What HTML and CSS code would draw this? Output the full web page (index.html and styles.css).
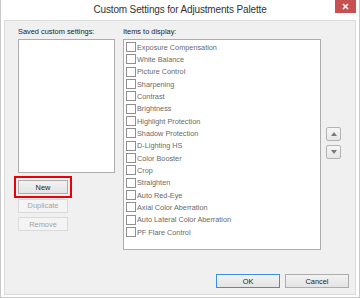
FILE: index.html
```html
<!DOCTYPE html>
<html lang="en">
<head>
    <meta charset="UTF-8">
    <title>Custom Settings for Adjustments Palette</title>
    <link rel="stylesheet" href="styles.css">
</head>
<body>
    <div class="window">
        <div class="titlebar">
            <span class="title">Custom Settings for Adjustments Palette</span>
            <svg class="win-close" width="21" height="13" viewBox="0 0 21 13">
                <rect width="21" height="13" fill="#c75050"/>
                <path d="M8 4 L13 9 M13 4 L8 9" stroke="#ffffff" stroke-width="1.6"/>
            </svg>
        </div>

        <div class="client">
            <div class="panes">
                <div class="saved-pane">
                    <div class="label">Saved custom settings:</div>
                    <div class="saved-list"></div>
                    <div class="side-buttons">
                        <button class="btn new-btn">New<span class="highlight"></span></button>
                        <button class="btn disabled">Duplicate</button>
                        <button class="btn disabled">Remove</button>
                    </div>
                </div>

                <div class="items-pane">
                    <div class="label">Items to display:</div>
                    <div class="items-list">
                        <label class="item"><span class="check"></span>Exposure Compensation</label>
                        <label class="item"><span class="check"></span>White Balance</label>
                        <label class="item"><span class="check"></span>Picture Control</label>
                        <label class="item"><span class="check"></span>Sharpening</label>
                        <label class="item"><span class="check"></span>Contrast</label>
                        <label class="item"><span class="check"></span>Brightness</label>
                        <label class="item"><span class="check"></span>Highlight Protection</label>
                        <label class="item"><span class="check"></span>Shadow Protection</label>
                        <label class="item"><span class="check"></span>D-Lighting HS</label>
                        <label class="item"><span class="check"></span>Color Booster</label>
                        <label class="item"><span class="check"></span>Crop</label>
                        <label class="item"><span class="check"></span>Straighten</label>
                        <label class="item"><span class="check"></span>Auto Red-Eye</label>
                        <label class="item"><span class="check"></span>Axial Color Aberration</label>
                        <label class="item"><span class="check"></span>Auto Lateral Color Aberration</label>
                        <label class="item"><span class="check"></span>PF Flare Control</label>
                    </div>
                </div>

                <div class="order-buttons">
                    <button class="arrow-btn"><span class="tri up"></span></button>
                    <button class="arrow-btn"><span class="tri down"></span></button>
                </div>
            </div>

            <div class="footer">
                <button class="btn wide default">OK</button>
                <button class="btn wide">Cancel</button>
            </div>
        </div>
    </div>
</body>
</html>
```

FILE: styles.css
```css
* {
    margin: 0;
    padding: 0;
    box-sizing: border-box;
}

body {
    font-family: 'Liberation Sans', Arial, sans-serif;
    background: #ffffff;
}

.window {
    width: 360px;
    height: 298px;
    display: flex;
    flex-direction: column;
    background: #ffffff;
    border: 1px solid #c9c9c9;
    border-top: none;
}

/* Title bar */
.titlebar {
    height: 20px;
    flex-shrink: 0;
    display: grid;
    grid-template-columns: 24px 1fr 24px;
    align-items: start;
}

.title {
    grid-column: 2;
    height: 20px;
    line-height: 20px;
    text-align: center;
    font-size: 10px;
    color: #333333;
    letter-spacing: -0.15px;
}

.win-close {
    grid-column: 3;
    display: block;
}

/* Client area */
.client {
    flex: 1;
    margin: 0 3px 2px 3px;
    background: #f0f0f0;
    border: 1px solid #dcdcdc;
    display: flex;
    flex-direction: column;
}

.panes {
    display: flex;
    padding: 6px 0 0 13px;
}

.label {
    height: 10px;
    line-height: 10px;
    font-size: 7.4px;
    color: #222222;
    margin-bottom: 2px;
}

.saved-pane {
    width: 97px;
    display: flex;
    flex-direction: column;
}

.saved-list {
    height: 134px;
    background: #ffffff;
    border: 1px solid #adadad;
}

.side-buttons {
    display: flex;
    flex-direction: column;
    gap: 4.5px;
    margin-top: 7px;
}

.btn {
    position: relative;
    width: 50px;
    height: 14px;
    font-family: inherit;
    font-size: 7.4px;
    color: #1e1e1e;
    background: linear-gradient(#f2f2f2, #e4e4e4);
    border: 1px solid #acacac;
}

.btn.disabled {
    color: #a3a3a3;
    background: #f4f4f4;
    border-color: #dadada;
}

.highlight {
    position: absolute;
    top: -5px;
    left: -5px;
    right: -5px;
    bottom: -5px;
    border: 2px solid #e8000b;
}

.items-pane {
    margin-left: 8px;
    display: flex;
    flex-direction: column;
}

.items-list {
    width: 198px;
    height: 211px;
    background: #ffffff;
    border: 1px solid #adadad;
    padding-top: 1px;
}

.item {
    display: flex;
    align-items: center;
    height: 12.33px;
    font-size: 7.3px;
    color: #6a6a6a;
    white-space: nowrap;
}

.check {
    width: 10px;
    height: 10px;
    margin: 0 1px 0 2px;
    background: #ffffff;
    border: 1px solid #8e8f8f;
    flex-shrink: 0;
}

.order-buttons {
    display: flex;
    flex-direction: column;
    gap: 4px;
    margin: 100px 0 0 5px;
}

.arrow-btn {
    width: 15px;
    height: 14px;
    border: 1px solid #b4b4b4;
    border-radius: 2px;
    background: linear-gradient(#f6f6f6, #e6e6e6);
    display: flex;
    align-items: center;
    justify-content: center;
}

.tri {
    width: 0;
    height: 0;
    border-left: 3.5px solid transparent;
    border-right: 3.5px solid transparent;
}

.tri.up {
    border-bottom: 4px solid #7a7a7a;
}

.tri.down {
    border-top: 4px solid #7a7a7a;
}

/* Dialog buttons */
.footer {
    margin-top: auto;
    display: flex;
    justify-content: flex-end;
    gap: 5px;
    padding: 0 6px 6px 0;
}

.btn.wide {
    width: 64px;
}

.btn.default {
    border-color: #3c8fe0;
}
```
